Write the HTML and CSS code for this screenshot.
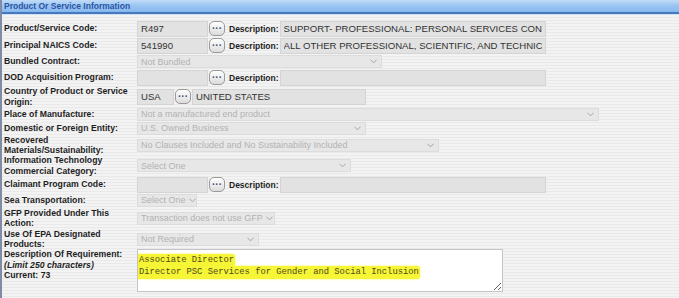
FILE: index.html
```html
<!DOCTYPE html>
<html>
<head>
  <meta charset="UTF-8">
  <title>Product Or Service Information</title>
  <link rel="stylesheet" href="styles.css">
</head>
<body>
  <div class="panel">
    <div class="panel-head">Product Or Service Information</div>

    <div class="form">
      <div class="row r17">
        <div class="lbl">Product/Service Code:</div>
        <div class="field">
          <input class="txt code" value="R497" readonly>
          <button class="pick">···</button>
          <span class="sub">Description:</span>
          <input class="txt desc" value="SUPPORT- PROFESSIONAL: PERSONAL SERVICES CONTRACTS" readonly>
        </div>
      </div>

      <div class="row r17">
        <div class="lbl">Principal NAICS Code:</div>
        <div class="field">
          <input class="txt code" value="541990" readonly>
          <button class="pick">···</button>
          <span class="sub">Description:</span>
          <input class="txt desc" value="ALL OTHER PROFESSIONAL, SCIENTIFIC, AND TECHNICAL SERVICES" readonly>
        </div>
      </div>

      <div class="row r15">
        <div class="lbl">Bundled Contract:</div>
        <div class="field">
          <span class="sel w245">Not Bundled <svg class="chev" viewBox="0 0 8 5"><path d="M0.5 0.5 L4 4 L7.5 0.5"/></svg></span>
        </div>
      </div>

      <div class="row r17">
        <div class="lbl">DOD Acquisition Program:</div>
        <div class="field">
          <input class="txt code" value="" readonly>
          <button class="pick">···</button>
          <span class="sub">Description:</span>
          <input class="txt desc" value="" readonly>
        </div>
      </div>

      <div class="row r21">
        <div class="lbl">Country of Product or Service Origin:</div>
        <div class="field">
          <input class="txt iso" value="USA" readonly>
          <button class="pick">···</button>
          <input class="txt country" value="UNITED STATES" readonly>
        </div>
      </div>

      <div class="row r14">
        <div class="lbl">Place of Manufacture:</div>
        <div class="field">
          <span class="sel w462">Not a manufactured end product <svg class="chev" viewBox="0 0 8 5"><path d="M0.5 0.5 L4 4 L7.5 0.5"/></svg></span>
        </div>
      </div>

      <div class="row r14">
        <div class="lbl">Domestic or Foreign Entity:</div>
        <div class="field">
          <span class="sel w229">U.S. Owned Business <svg class="chev" viewBox="0 0 8 5"><path d="M0.5 0.5 L4 4 L7.5 0.5"/></svg></span>
        </div>
      </div>

      <div class="row r20">
        <div class="lbl">Recovered Materials/Sustainability:</div>
        <div class="field">
          <span class="sel w302">No Clauses Included and No Sustainability Included <svg class="chev" viewBox="0 0 8 5"><path d="M0.5 0.5 L4 4 L7.5 0.5"/></svg></span>
        </div>
      </div>

      <div class="row r21">
        <div class="lbl">Information Technology Commercial Category:</div>
        <div class="field">
          <span class="sel w214">Select One <svg class="chev" viewBox="0 0 8 5"><path d="M0.5 0.5 L4 4 L7.5 0.5"/></svg></span>
        </div>
      </div>

      <div class="row r17">
        <div class="lbl">Claimant Program Code:</div>
        <div class="field">
          <input class="txt code" value="" readonly>
          <button class="pick">···</button>
          <span class="sub">Description:</span>
          <input class="txt desc" value="" readonly>
        </div>
      </div>

      <div class="row r14">
        <div class="lbl">Sea Transportation:</div>
        <div class="field">
          <span class="sel w60">Select One <svg class="chev" viewBox="0 0 8 5"><path d="M0.5 0.5 L4 4 L7.5 0.5"/></svg></span>
        </div>
      </div>

      <div class="row r22">
        <div class="lbl">GFP Provided Under This Action:</div>
        <div class="field">
          <span class="sel w138">Transaction does not use GFP <svg class="chev" viewBox="0 0 8 5"><path d="M0.5 0.5 L4 4 L7.5 0.5"/></svg></span>
        </div>
      </div>

      <div class="row r20">
        <div class="lbl">Use Of EPA Designated Products:</div>
        <div class="field">
          <span class="sel w122">Not Required <svg class="chev" viewBox="0 0 8 5"><path d="M0.5 0.5 L4 4 L7.5 0.5"/></svg></span>
        </div>
      </div>

      <div class="row r44">
        <div class="lbl">
          Description Of Requirement:<br>
          <em>(Limit 250 characters)</em><br>
          Current: 73
        </div>
        <div class="field">
          <div class="area">
            <span class="hl">Associate Director</span><br>
            <span class="hl">Director PSC Services for Gender and Social Inclusion</span>
          </div>
        </div>
      </div>
    </div>
  </div>
</body>
</html>
```

FILE: styles.css
```css
body {
  margin: 0;
  font-family: "Liberation Sans", Arial, sans-serif;
  background: #eeeeee;
}
.panel {
  height: 298px;
  border-left: 2px solid #7e8ca6;
  background: repeating-linear-gradient(to bottom, #f3f3f3 0, #f3f3f3 2px, #e9e9e9 2px, #e9e9e9 3px);
  overflow: hidden;
}
.panel-head {
  height: 12px;
  line-height: 12px;
  padding-left: 2px;
  font-size: 8.5px;
  font-weight: bold;
  color: #2a55a5;
  background: linear-gradient(to bottom, #c2dcf7 0%, #9cc6f2 45%, #86b8ee 100%);
  border-bottom: 2px solid #4578bd;
  box-shadow: 0 1px 0 #cfe0f3;
}
.form {
  padding: 6px 0 0 2px;
}
.row {
  display: flex;
  align-items: center;
}
.r14 { height: 14px; }
.r15 { height: 15px; }
.r17 { height: 17px; }
.r20 { height: 20px; }
.r21 { height: 21px; }
.r22 { height: 22px; }
.r44 { height: 44px; align-items: flex-start; }

.lbl {
  width: 133px;
  flex: none;
  font-size: 8.7px;
  font-weight: bold;
  line-height: 10.5px;
  color: #1e1e1e;
}
.lbl em {
  font-style: italic;
}
.r44 .lbl {
  padding-top: 0;
}
.field {
  display: flex;
  align-items: center;
}
.txt {
  box-sizing: border-box;
  height: 16px;
  margin: 0;
  padding: 0 3px;
  border: 1px solid #d4d4d4;
  background: #e2e2e2;
  font-family: "Liberation Sans", Arial, sans-serif;
  font-size: 9.6px;
  color: #333;
  outline: none;
}
.code { width: 71px; }
.desc { width: 266px; margin-left: 1px; }
.iso { width: 37px; }
.country { width: 174px; margin-left: 1px; }

.pick {
  box-sizing: border-box;
  width: 16px;
  height: 15px;
  margin: 0 0 0 1px;
  padding: 0;
  border: 1px solid #9a9a9a;
  border-radius: 5px;
  background: linear-gradient(to bottom, #ffffff, #dcdcdc);
  font-family: "Liberation Sans", Arial, sans-serif;
  font-size: 10px;
  font-weight: bold;
  line-height: 11px;
  color: #3f5574;
}
.sub {
  margin-left: 4px;
  font-size: 8.5px;
  font-weight: bold;
  color: #1e1e1e;
}

.sel {
  box-sizing: border-box;
  display: inline-flex;
  align-items: center;
  justify-content: space-between;
  height: 13px;
  padding: 0 4px 0 3px;
  border: 1px solid #dcdcdc;
  background: #e7e7e7;
  font-size: 9px;
  color: #b2b2b2;
  white-space: nowrap;
  overflow: hidden;
}
.chev {
  width: 7px;
  height: 5px;
  flex: none;
  margin-left: 3px;
  fill: none;
  stroke: #9a9a9a;
  stroke-width: 1;
}
.w60 { width: 60px; }
.w122 { width: 122px; }
.w138 { width: 138px; }
.w214 { width: 214px; }
.w229 { width: 229px; }
.w245 { width: 245px; }
.w302 { width: 302px; }
.w462 { width: 462px; }

.area {
  box-sizing: border-box;
  width: 366px;
  height: 43px;
  padding: 4px 2px 0 1px;
  border: 1px solid #c4c4c4;
  background: #ffffff;
  font-family: "Liberation Mono", "DejaVu Sans Mono", monospace;
  font-size: 8.8px;
  line-height: 12px;
  color: #4d4b1c;
  resize: both;
  overflow: hidden;
}
.hl {
  background: #f6f536;
  padding: 1px 1px 2px 3px;
  margin-left: -3px;
  border-radius: 3px;
  box-shadow: 0 0 2px #f6f536;
}
```
